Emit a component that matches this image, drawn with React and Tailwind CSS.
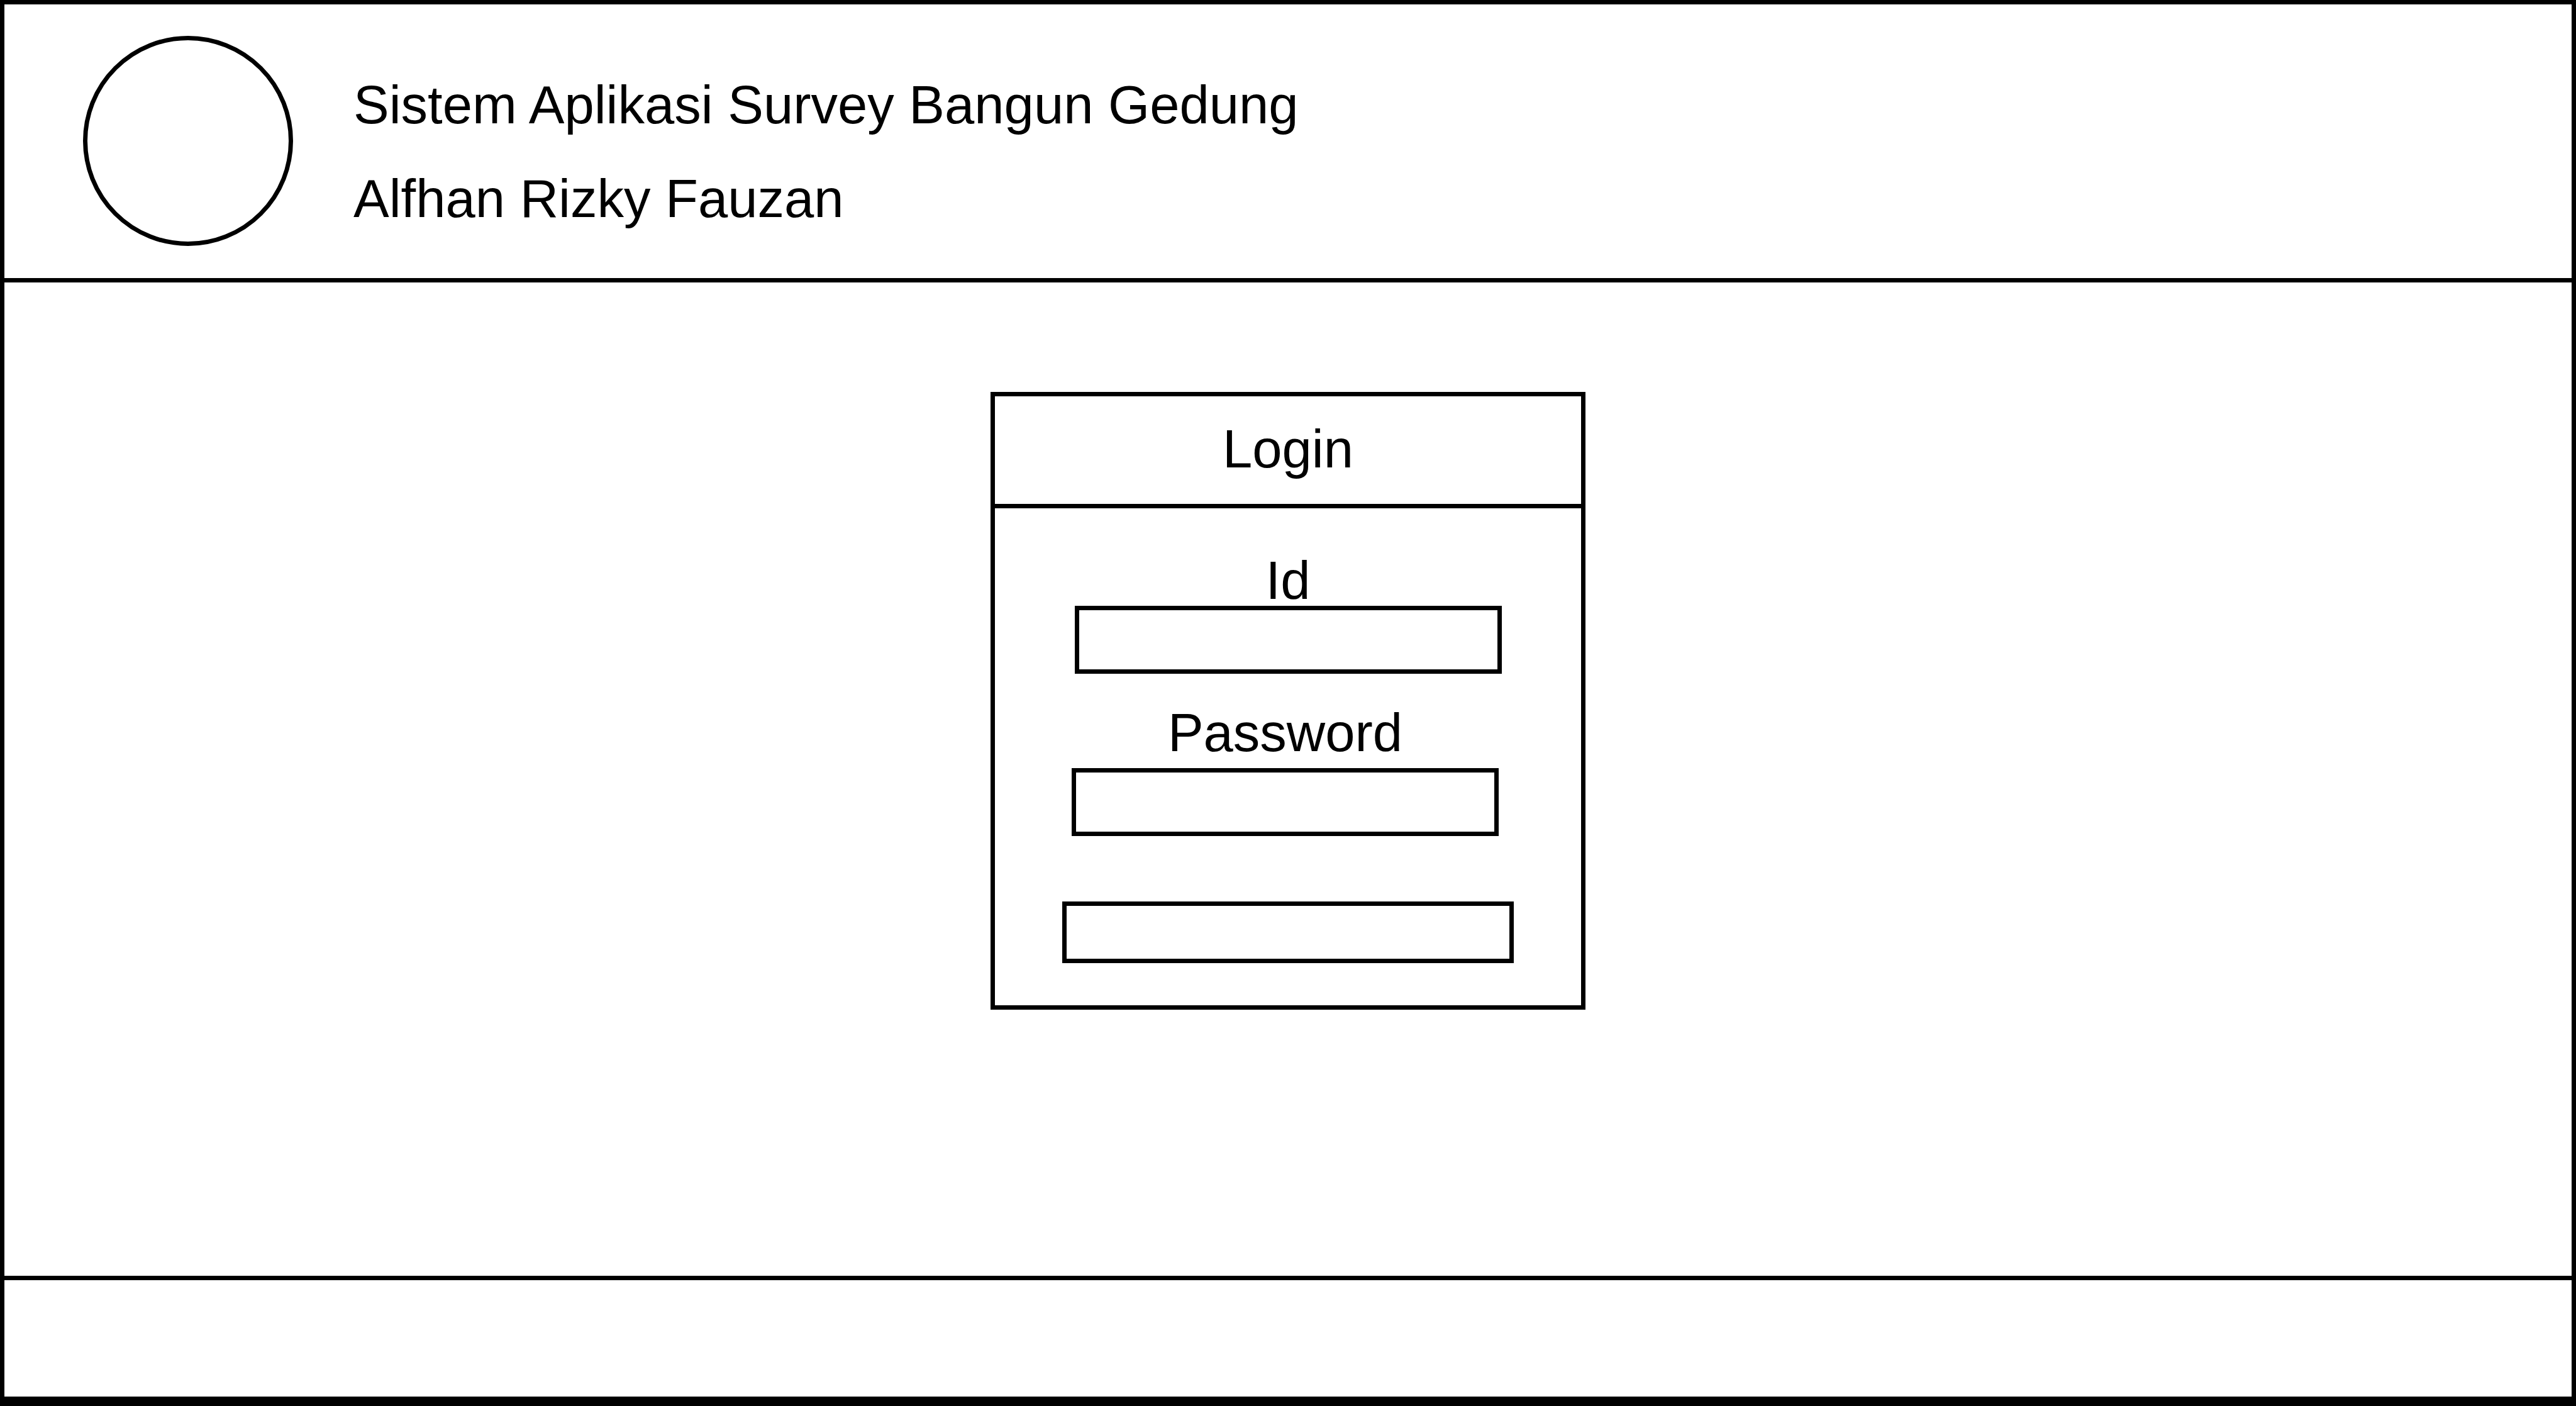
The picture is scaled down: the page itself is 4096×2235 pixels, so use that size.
function Field({ id, label, type, autoComplete, className }) {
  return (
    <div className={`flex w-full flex-col items-center ${className}`}>
      <label htmlFor={id}>{label}</label>
      <input
        id={id}
        name={id}
        type={type}
        autoComplete={autoComplete}
        className="h-[108px] w-full max-w-[679px] border-[7px] border-black bg-white px-6 outline-none"
      />
    </div>
  );
}

function Header() {
  return (
    <header className="flex items-start gap-24 border-b-[7px] border-black px-[125px] pt-[50px] pb-[51px]">
      <div
        role="img"
        aria-label="Logo"
        className="size-[334px] shrink-0 rounded-full border-[7px] border-black"
      />
      <div className="flex flex-col gap-[69px] pt-[70px]">
        <h1>Sistem Aplikasi Survey Bangun Gedung</h1>
        <p>Alfhan Rizky Fauzan</p>
      </div>
    </header>
  );
}

function LoginCard() {
  return (
    <form
      onSubmit={(event) => event.preventDefault()}
      className="w-full max-w-[946px] border-[7px] border-black"
    >
      <h2 className="border-b-[7px] border-black pt-11 pb-[47px] text-center">Login</h2>
      <div className="flex flex-col items-center pt-[75px] pb-[67px]">
        <Field id="user-id" label="Id" type="text" autoComplete="username" className="" />
        <Field
          id="password"
          label="Password"
          type="password"
          autoComplete="current-password"
          className="gap-4 pt-[54px] pr-[9px]"
        />
        <button
          type="submit"
          aria-label="Login"
          className="mt-[104px] h-[98px] w-full max-w-[718px] border-[7px] border-black bg-white"
        />
      </div>
    </form>
  );
}

export default function App() {
  return (
    <div className="flex min-h-screen flex-col border-[7px] border-b-[15px] border-black bg-white font-['Liberation_Sans',Arial,sans-serif] text-[85px] leading-[80px] text-black">
      <Header />
      <main className="flex flex-1 flex-col items-center pt-[174px]">
        <LoginCard />
      </main>
      <footer className="h-48 border-t-[7px] border-black" />
    </div>
  );
}
